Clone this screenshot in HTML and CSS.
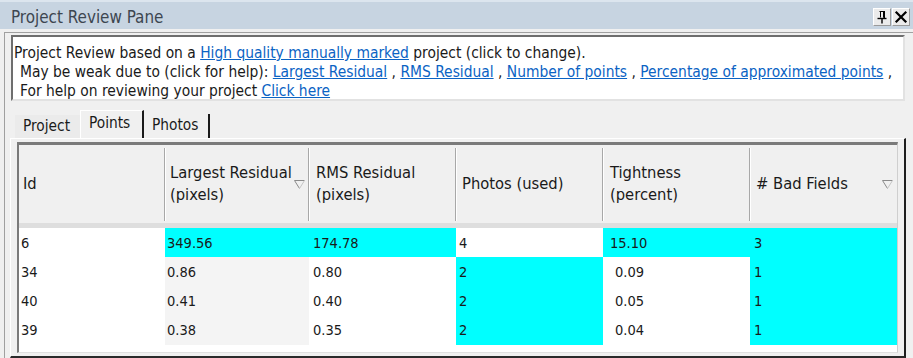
FILE: index.html
```html
<!DOCTYPE html>
<html>
<head>
<meta charset="utf-8">
<title>Project Review Pane</title>
<link rel="stylesheet" href="styles.css">
</head>
<body>
<div class="titlebar">
  <span class="title">Project Review Pane</span>
  <div class="tbtns">
    <span class="tbtn">
      <svg width="16" height="16" viewBox="0 0 16 16">
        <path d="M5.5 2.5h5M6.5 2.5v6M9.5 2.5v6" stroke="#000" stroke-width="1" fill="none"/>
        <rect x="9.5" y="2" width="1.5" height="7" fill="#000"/>
        <path d="M3.5 9.5h9" stroke="#000" stroke-width="1.4"/>
        <path d="M8 10v4.5" stroke="#000" stroke-width="1.4"/>
      </svg>
    </span>
    <span class="tbtn">
      <svg width="16" height="16" viewBox="0 0 16 16">
        <path d="M3.5 3.5l9 9M12.5 3.5l-9 9" stroke="#000" stroke-width="2.2" stroke-linecap="square"/>
      </svg>
    </span>
  </div>
</div>
<div class="main">
  <div class="info">
    <div class="line">Project Review based on a <a href="#">High quality manually marked</a> project (click to change).</div>
    <div class="line ind">May be weak due to (click for help): <a href="#">Largest Residual</a> , <a href="#">RMS Residual</a> , <a href="#">Number of points</a> , <a href="#">Percentage of approximated points</a> ,</div>
    <div class="line ind">For help on reviewing your project <a href="#">Click here</a></div>
  </div>
  <div class="tabs">
    <span class="tab first">Project</span>
    <span class="tab active">Points</span>
    <span class="tab last">Photos</span>
  </div>
  <div class="page">
    <div class="grid">
      <div class="hc c1">Id</div>
      <div class="hc c2">Largest Residual<br>(pixels)<svg class="sort" width="11" height="9" viewBox="0 0 11 9"><path d="M0.5 0.5h10M0.5 0.5l5 8" stroke="#8a8a8a" fill="none"/><path d="M10.5 0.5l-5 8" stroke="#c4c4c4" fill="none"/></svg></div>
      <div class="hc c3">RMS Residual<br>(pixels)</div>
      <div class="hc c4">Photos (used)</div>
      <div class="hc c5">Tightness<br>(percent)</div>
      <div class="hc c6"># Bad Fields<svg class="sort" width="11" height="9" viewBox="0 0 11 9"><path d="M0.5 0.5h10M0.5 0.5l5 8" stroke="#8a8a8a" fill="none"/><path d="M10.5 0.5l-5 8" stroke="#c4c4c4" fill="none"/></svg></div>

      <div class="dc c1">6</div>
      <div class="dc c2 hi">349.56</div>
      <div class="dc c3 hi">174.78</div>
      <div class="dc c4">4</div>
      <div class="dc c5 hi">15.10</div>
      <div class="dc c6 hi">3</div>

      <div class="dc c1">34</div>
      <div class="dc c2 sorted">0.86</div>
      <div class="dc c3">0.80</div>
      <div class="dc c4 hi">2</div>
      <div class="dc c5 sp">0.09</div>
      <div class="dc c6 hi">1</div>

      <div class="dc c1">40</div>
      <div class="dc c2 sorted">0.41</div>
      <div class="dc c3">0.40</div>
      <div class="dc c4 hi">2</div>
      <div class="dc c5 sp">0.05</div>
      <div class="dc c6 hi">1</div>

      <div class="dc c1">39</div>
      <div class="dc c2 sorted">0.38</div>
      <div class="dc c3">0.35</div>
      <div class="dc c4 hi">2</div>
      <div class="dc c5 sp">0.04</div>
      <div class="dc c6 hi">1</div>
    </div>
  </div>
</div>
</body>
</html>
```

FILE: styles.css
```css
* { box-sizing: border-box; }
html, body { margin: 0; padding: 0; }
body {
  width: 913px;
  height: 358px;
  overflow: hidden;
  background: #f0f0f0;
  font-family: "DejaVu Sans Condensed", "DejaVu Sans", sans-serif;
  color: #1a1a1a;
}

.titlebar {
  height: 29px;
  background: #c7d4e1;
  border-top: 2px solid #dce5ee;
  display: flex;
  align-items: center;
  justify-content: space-between;
  padding: 2px 3px 0 11px;
}
.title {
  font-size: 16.9px;
  color: #3d4650;
}
.tbtns { display: flex; gap: 1px; }
.tbtn {
  width: 18px;
  height: 18px;
  display: flex;
  align-items: center;
  justify-content: center;
  background: #ebebeb;
  border: 1px solid;
  border-color: #ffffff #9a9a9a #9a9a9a #ffffff;
}

.main {
  height: 326px;
  margin: 3px 0 0 4px;
  border-top: 1px solid #a0a0a0;
  border-left: 1px solid #a0a0a0;
  display: flex;
  flex-direction: column;
}

.info {
  height: 66px;
  margin: 2px 8px 0 6px;
  background: #ffffff;
  border: 2px solid;
  border-color: #6e6e6e #e2e2e2 #e2e2e2 #6e6e6e;
  padding: 7px 2px 0 1px;
  font-size: 15.4px;
  line-height: 19px;
  white-space: nowrap;
  overflow: hidden;
}
.info .ind { padding-left: 6px; }
.info a { color: #0b63c4; text-decoration: underline; }

.tabs {
  height: 28px;
  margin-top: 9px;
  padding-left: 10px;
  display: flex;
  align-items: flex-end;
  font-size: 15.3px;
}
.tab {
  height: 23px;
  line-height: 22px;
  padding: 0 8px;
  background: #ebebeb;
}
.tab.first { width: 65px; }
.tab.active {
  height: 28px;
  width: 64px;
  line-height: 24px;
  background: #f0f0f0;
  border-top: 1px solid #ffffff;
  border-left: 1px solid #ffffff;
  border-right: 2px solid #1a1a1a;
}
.tab.last {
  width: 66px;
  height: 24px;
  background: #f0f0f0;
  border-right: 2px solid #1a1a1a;
}

.page {
  flex: 1;
  margin: 0 7px 0 5px;
  border-top: 1px solid #ffffff;
  border-left: 1px solid #ffffff;
  border-right: 2px solid #1e1e1e;
  border-bottom: 2px solid #2a2a2a;
  padding: 3px 6px 2px 6px;
}

.grid {
  height: 211px;
  background: #ffffff;
  border-top: 3px solid #7a7a7a;
  border-left: 2px solid #7a7a7a;
  border-right: 1px solid #cfcfcf;
  border-bottom: 1px solid #e0e0e0;
  display: grid;
  grid-template-columns: 146px 144px 147px 147px 147px 147px;
  grid-template-rows: 83px repeat(4, 29.25px);
  align-content: start;
  font-size: 14.5px;
}

.hc {
  position: relative;
  background: #f0f0f0;
  border-bottom: 5px solid #dedede;
  display: flex;
  align-items: center;
  line-height: 22px;
  padding-left: 5px;
  font-size: 16.4px;
}
.hc + .hc::before {
  content: "";
  position: absolute;
  left: -1px;
  top: 3px;
  bottom: 2px;
  width: 1px;
  background: #a8a8a8;
  box-shadow: 1px 0 0 #ffffff;
}
.hc.c1 { padding-left: 4px; }
.hc.c3 { padding-left: 7px; }
.hc.c4 { padding-left: 6px; }
.hc.c5 { padding-left: 7px; }
.hc.c6 { padding-left: 6px; }
.sort { position: absolute; right: 4px; top: 35px; }

.dc {
  display: flex;
  align-items: center;
  padding-left: 3px;
  white-space: pre;
}
.dc.c1 { padding-left: 2px; }
.dc.c2 { padding-left: 2px; }
.dc.c3 { padding-left: 4px; }
.dc.c5 { padding-left: 7px; }
.dc.c5.sp { padding-left: 12px; }
.dc.c6 { padding-left: 4px; }
.sorted { background: #f4f4f4; }
.hi { background: #00ffff; }
```
